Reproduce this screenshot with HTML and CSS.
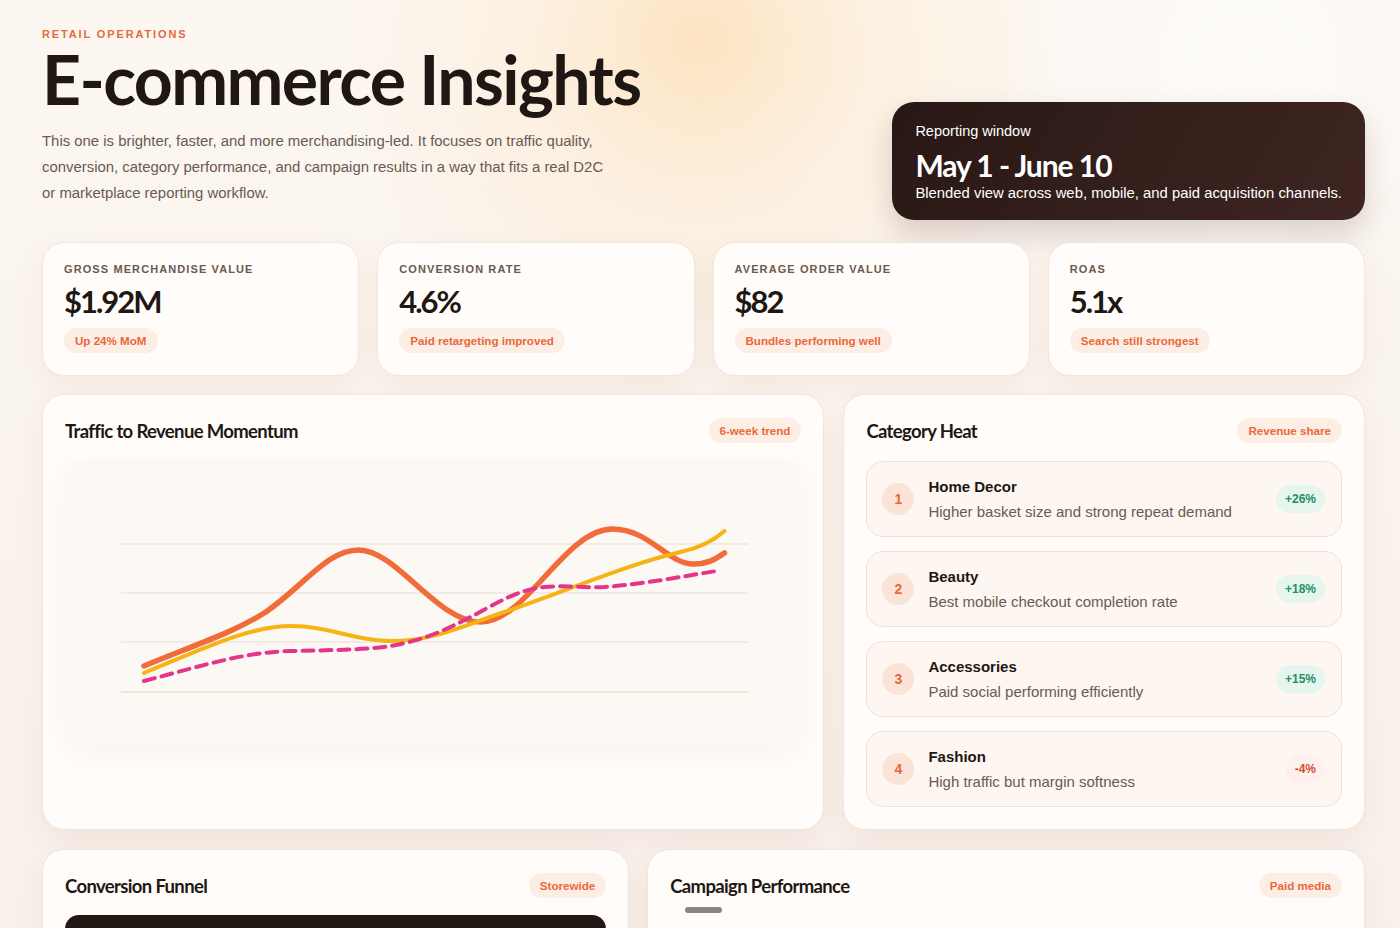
FILE: index.html
```html
<!DOCTYPE html>
<html lang="en">
<head>
<meta charset="utf-8">
<title>E-commerce Insights</title>
<link rel="stylesheet" href="styles.css">
</head>
<body>
<div class="page">
  <header class="hero">
    <div class="hero-text">
      <div class="eyebrow">RETAIL OPERATIONS</div>
      <h1>E-commerce Insights</h1>
      <p class="lead">This one is brighter, faster, and more merchandising-led. It focuses on traffic quality, conversion, category performance, and campaign results in a way that fits a real D2C or marketplace reporting workflow.</p>
    </div>
    <div class="window-card">
      <div class="window-label">Reporting window</div>
      <div class="window-date">May 1 - June 10</div>
      <div class="window-sub">Blended view across web, mobile, and paid acquisition channels.</div>
    </div>
  </header>

  <section class="kpis">
    <div class="card kpi">
      <div class="kpi-label">GROSS MERCHANDISE VALUE</div>
      <div class="kpi-value">$1.92M</div>
      <span class="pill">Up 24% MoM</span>
    </div>
    <div class="card kpi">
      <div class="kpi-label">CONVERSION RATE</div>
      <div class="kpi-value">4.6%</div>
      <span class="pill">Paid retargeting improved</span>
    </div>
    <div class="card kpi">
      <div class="kpi-label">AVERAGE ORDER VALUE</div>
      <div class="kpi-value">$82</div>
      <span class="pill">Bundles performing well</span>
    </div>
    <div class="card kpi">
      <div class="kpi-label">ROAS</div>
      <div class="kpi-value">5.1x</div>
      <span class="pill">Search still strongest</span>
    </div>
  </section>

  <section class="row-two">
    <div class="card panel">
      <div class="panel-head">
        <h2>Traffic to Revenue Momentum</h2>
        <span class="pill">6-week trend</span>
      </div>
      <div class="chart-box">
        <svg class="chart" viewBox="0 0 737 285" preserveAspectRatio="none">
          <g stroke="#f0e6de" stroke-width="1.5">
            <line x1="56" y1="84" x2="684" y2="84"/>
            <line x1="56" y1="133" x2="684" y2="133"/>
            <line x1="56" y1="182" x2="684" y2="182"/>
            <line x1="56" y1="232" x2="684" y2="232" stroke="#ece0d4"/>
          </g>
          <path d="M79,206 C130,185 170,172 201,152 C240,125 262,90 294,90 C332,90 372,162 416,162 C462,162 500,69 548,69 C585,69 603,104 629,104 C645,104 652,98 660,93" fill="none" stroke="#f26b3a" stroke-width="5.5" stroke-linecap="round"/>
          <path d="M79,213 C140,188 185,166 226,166 C265,166 290,181 326,181 C370,181 400,165 440,152 C500,132 560,105 616,92 C635,88 650,80 660,71" fill="none" stroke="#f6b414" stroke-width="4" stroke-linecap="round"/>
          <path d="M79,221 C140,205 180,192 226,191 C270,190 300,190 326,186 C360,180 380,170 400,160 C430,145 450,130 480,127 C500,125 520,128 540,127 C580,124 620,116 652,111" fill="none" stroke="#e5358b" stroke-width="4" stroke-dasharray="11 7" stroke-linecap="round"/>
        </svg>
      </div>
    </div>
    <div class="card panel">
      <div class="panel-head">
        <h2>Category Heat</h2>
        <span class="pill">Revenue share</span>
      </div>
      <div class="cat-list">
        <div class="cat">
          <span class="rank">1</span>
          <div class="cat-text">
            <div class="cat-name">Home Decor</div>
            <div class="cat-desc">Higher basket size and strong repeat demand</div>
          </div>
          <span class="delta up">+26%</span>
        </div>
        <div class="cat">
          <span class="rank">2</span>
          <div class="cat-text">
            <div class="cat-name">Beauty</div>
            <div class="cat-desc">Best mobile checkout completion rate</div>
          </div>
          <span class="delta up">+18%</span>
        </div>
        <div class="cat">
          <span class="rank">3</span>
          <div class="cat-text">
            <div class="cat-name">Accessories</div>
            <div class="cat-desc">Paid social performing efficiently</div>
          </div>
          <span class="delta up">+15%</span>
        </div>
        <div class="cat">
          <span class="rank">4</span>
          <div class="cat-text">
            <div class="cat-name">Fashion</div>
            <div class="cat-desc">High traffic but margin softness</div>
          </div>
          <span class="delta down">-4%</span>
        </div>
      </div>
    </div>
  </section>

  <section class="row-three">
    <div class="card panel">
      <div class="panel-head">
        <h2>Conversion Funnel</h2>
        <span class="pill">Storewide</span>
      </div>
      <div class="funnel-bar"></div>
    </div>
    <div class="card panel">
      <div class="panel-head">
        <h2>Campaign Performance</h2>
        <span class="pill">Paid media</span>
      </div>
      <div class="campaign-tab"></div>
    </div>
  </section>
</div>
</body>
</html>
```
FILE: styles.css
```css
* { box-sizing: border-box; }
html, body { margin: 0; padding: 0; }
body {
  height: 928px;
  overflow: hidden;
  font-family: "Liberation Sans", Arial, sans-serif;
  color: #1e1714;
  background:
    radial-gradient(circle at 700px 40px, rgba(253, 222, 178, 0.75) 0, rgba(253, 228, 196, 0.35) 170px, rgba(253, 240, 225, 0) 360px),
    radial-gradient(circle at 1250px 60px, rgba(255, 255, 255, 0.6) 0, rgba(255, 255, 255, 0) 260px),
    linear-gradient(180deg, #fcf7f1 0%, #f8f0ea 100%);
}
.page {
  padding: 27px 35px 0 42px;
}
.hero {
  display: flex;
  justify-content: space-between;
  align-items: flex-end;
}
.eyebrow {
  font-size: 11px;
  line-height: 14px;
  font-weight: 700;
  letter-spacing: 0.17em;
  color: #e8693b;
}
h1 {
  margin: 4px 0 0;
  font-family: Lato, "Noto Sans", sans-serif;
  font-weight: 700;
  font-size: 68px;
  line-height: 68px;
  letter-spacing: -0.024em;
  color: #1e1714;
}
.lead {
  margin: 15px 0 14px;
  max-width: 572px;
  font-size: 14.9px;
  line-height: 26px;
  color: #6a5a52;
}
.window-card {
  flex: none;
  padding: 20px 23px 18px;
  border-radius: 22px;
  background: linear-gradient(120deg, #281815 0%, #36201c 60%, #3e2521 100%);
  color: #fff;
  box-shadow: 0 14px 30px rgba(60, 30, 20, 0.18);
}
.window-label {
  font-size: 14.5px;
  line-height: 18px;
}
.window-date {
  margin-top: 7px;
  font-family: Lato, "Noto Sans", sans-serif;
  font-weight: 700;
  font-size: 30px;
  line-height: 37px;
  letter-spacing: -0.035em;
}
.window-sub {
  font-size: 14.85px;
  line-height: 18px;
}

.card {
  min-width: 0;
  background: #fffcf9;
  border: 1px solid #f2e5dc;
  border-radius: 22px;
  box-shadow: 0 10px 28px rgba(140, 80, 40, 0.07);
}
.kpis {
  margin-top: 22px;
  display: grid;
  grid-template-columns: repeat(4, 1fr);
  gap: 18px;
}
.kpi {
  padding: 19px 21px 22px;
}
.kpi-label {
  font-size: 11px;
  line-height: 14px;
  font-weight: 700;
  letter-spacing: 0.1em;
  color: #6a5a52;
}
.kpi-value {
  margin-top: 8px;
  font-family: Lato, "Noto Sans", sans-serif;
  font-weight: 700;
  font-size: 31px;
  line-height: 35px;
  letter-spacing: -0.065em;
  color: #1e1714;
}
.pill {
  display: inline-block;
  height: 25px;
  line-height: 25px;
  padding: 0 11px;
  border-radius: 13px;
  background: #fdeee5;
  color: #e8693b;
  font-size: 11.6px;
  font-weight: 700;
  white-space: nowrap;
}
.kpi .pill { margin-top: 9px; }

.row-two {
  margin-top: 18px;
  display: grid;
  grid-template-columns: 1.5fr 1fr;
  gap: 19px;
}
.panel {
  padding: 23px 22px 22px;
}
.panel-head {
  display: flex;
  justify-content: space-between;
  align-items: center;
  height: 25px;
}
h2 {
  margin: 0;
  font-family: Lato, "Noto Sans", sans-serif;
  font-weight: 700;
  font-size: 18.5px;
  letter-spacing: -0.035em;
  color: #1e1714;
}
.chart-box {
  margin-top: 17px;
  height: 285px;
  border-radius: 20px;
  background: #fcf8f4;
  box-shadow: 0 8px 24px rgba(150, 100, 60, 0.05);
  overflow: hidden;
}
.chart {
  display: block;
  width: 100%;
  height: 285px;
}

.cat-list {
  margin-top: 18px;
  display: flex;
  flex-direction: column;
  gap: 14px;
}
.cat {
  display: flex;
  align-items: center;
  height: 76px;
  padding: 0 16px 0 15px;
  border: 1px solid #f0e1d7;
  border-radius: 17px;
  background: #fdf6f1;
}
.rank {
  flex: none;
  width: 32px;
  height: 32px;
  border-radius: 50%;
  background: #fce3d7;
  color: #e8693b;
  font-size: 14px;
  font-weight: 700;
  display: flex;
  align-items: center;
  justify-content: center;
}
.cat-text {
  flex: 1;
  margin-left: 14px;
}
.cat-name {
  font-size: 15px;
  line-height: 18px;
  font-weight: 700;
  color: #1e1714;
}
.cat-desc {
  margin-top: 7px;
  font-size: 15px;
  line-height: 18px;
  color: #6a5a52;
}
.delta {
  flex: none;
  height: 28px;
  line-height: 28px;
  padding: 0 9px;
  border-radius: 14px;
  font-size: 12px;
  font-weight: 700;
}
.delta.up { background: #e6f6ee; color: #1f8f66; }
.delta.down { background: #fdf0ee; color: #d2502f; }

.row-three {
  margin-top: 19px;
  display: grid;
  grid-template-columns: 0.9fr 1.1fr;
  gap: 18px;
}
.row-three .panel { height: 200px; }
.funnel-bar {
  margin-top: 17px;
  height: 60px;
  border-radius: 14px;
  background: #221915;
}
.campaign-tab {
  margin-top: 9px;
  margin-left: 15px;
  width: 37px;
  height: 6px;
  border-radius: 3px;
  background: #8a8582;
}
```
